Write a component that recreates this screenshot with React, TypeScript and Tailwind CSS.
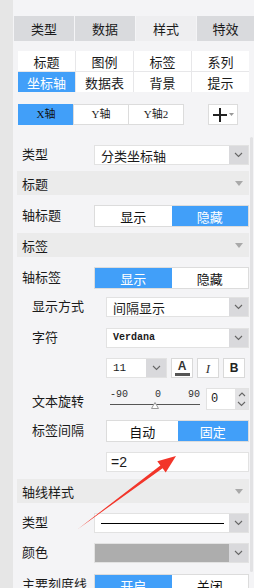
import React from 'react';

const cjk = "font-['Noto_Sans_CJK_SC',sans-serif]";
const mono = "font-['Liberation_Mono',monospace]";

function Chevron() {
  return (
    <svg width="9" height="6" viewBox="0 0 9 6">
      <path d="M1 1l3.5 3.5L8 1" fill="none" stroke="#666" strokeWidth="1.1" />
    </svg>
  );
}

function Caret() {
  return (
    <svg width="8" height="5" viewBox="0 0 8 5">
      <path d="M0 0h8L4 5z" fill="#a9a9a9" />
    </svg>
  );
}

function Select({ className = '', children }: { className?: string; children?: React.ReactNode }) {
  return (
    <div className={`flex h-[20px] border border-[#e2e2e2] bg-white ${className}`}>
      <div className="flex flex-1 items-center overflow-hidden pl-[6px]">{children}</div>
      <div className="flex w-[19px] items-center justify-center bg-[#d9d9dc]">
        <Chevron />
      </div>
    </div>
  );
}

function Toggle({ left, right, on, className = '' }: { left: string; right: string; on: 0 | 1; className?: string }) {
  const cell = 'flex flex-1 items-center justify-center text-[13px]';
  return (
    <div className={`flex h-[22px] border border-[#dcdcdc] bg-white ${className}`}>
      <div className={`${cell} ${on === 0 ? 'bg-[#419ff9] text-white' : 'text-[#111]'}`}>{left}</div>
      <div className={`${cell} ${on === 1 ? 'bg-[#419ff9] text-white' : 'text-[#111]'}`}>{right}</div>
    </div>
  );
}

function Header({ title, className = '' }: { title: string; className?: string }) {
  return (
    <div className={`flex h-[24px] shrink-0 items-center justify-between bg-[#ebebeb] pl-[5px] pr-[6px] text-[13px] ${className}`}>
      <span>{title}</span>
      <Caret />
    </div>
  );
}

function Row({ label, sub, className = '', children }: { label: string; sub?: boolean; className?: string; children: React.ReactNode }) {
  return (
    <div className={`flex shrink-0 items-center ${className}`}>
      <span className={`${sub ? 'w-[89px] pl-[15px]' : 'w-[77px] pl-[5px]'} -mt-[3px] shrink-0 whitespace-nowrap text-[13px]`}>{label}</span>
      <div className="flex flex-1">{children}</div>
    </div>
  );
}

export default function App() {
  const tabs = ['类型', '数据', '样式', '特效'];
  const subTabs = ['标题', '图例', '标签', '系列', '坐标轴', '数据表', '背景', '提示'];
  const axes = ['X轴', 'Y轴', 'Y轴2'];

  return (
    <div className={`relative flex h-[588px] w-[254px] items-start overflow-hidden bg-[#f4f4f6] leading-none text-[#1b1b1b] ${cjk}`}>
      <div className="w-[13px] shrink-0 self-stretch bg-[#e6e6e6]" />

      <div className="flex flex-1 flex-col pt-[16px]">
        {/* main tabs */}
        <div className="ml-px grid h-[25px] shrink-0 grid-cols-[60px_60px_60px_1fr] gap-px">
          {tabs.map((t, i) => (
            <div
              key={t}
              className={`flex items-center justify-center text-[13px] ${i === 2 ? 'bg-[#eeeef0]' : 'bg-[#d9dadd]'}`}
            >
              {t}
            </div>
          ))}
        </div>

        {/* sub tabs */}
        <div className="ml-[5px] mt-[10px] grid w-[231px] shrink-0 grid-cols-4 gap-px bg-[#e7e7e9]">
          {subTabs.map((t, i) => (
            <div
              key={t}
              className={`flex h-[20px] items-center justify-center text-[13px] ${i === 4 ? 'bg-[#419ff9] text-white' : 'bg-white'}`}
            >
              {t}
            </div>
          ))}
        </div>

        {/* axis tabs */}
        <div className="ml-[5px] mt-[12px] flex shrink-0 items-center">
          {axes.map((a, i) => (
            <div
              key={a}
              className={`flex h-[21px] w-[56px] items-center justify-center border text-[11px] font-['Liberation_Serif','Noto_Sans_CJK_SC',serif] ${
                i === 0 ? 'border-[#419ff9] bg-[#419ff9] text-[#111]' : '-ml-px border-[#dcdcdc] bg-white'
              }`}
            >
              {a}
            </div>
          ))}
          <div className="ml-[24px] flex h-[21px] w-[30px] items-center justify-center gap-[2px] border border-[#dcdcdc] bg-white">
            <svg width="14" height="14" viewBox="0 0 14 14">
              <path d="M7 0v14M0 7h14" stroke="#222" strokeWidth="2" />
            </svg>
            <svg width="5" height="3" viewBox="0 0 5 3">
              <path d="M0 0h5L2.5 3z" fill="#999" />
            </svg>
          </div>
        </div>

        {/* property rows */}
        <div className="ml-[4px] mt-[20px] flex w-[232px] shrink-0 flex-col">
          <Row label="类型">
            <Select className="w-full">
              <span className="text-[13px]">分类坐标轴</span>
            </Select>
          </Row>

          <Header title="标题" className="mt-[6px]" />
          <Row label="轴标题" className="mt-[10px]">
            <Toggle left="显示" right="隐藏" on={1} className="w-full" />
          </Row>

          <Header title="标签" className="mt-[6px]" />
          <Row label="轴标签" className="mt-[10px]">
            <Toggle left="显示" right="隐藏" on={0} className="w-full" />
          </Row>

          <Row label="显示方式" sub className="mt-[8px]">
            <Select className="w-full">
              <span className="text-[13px]">间隔显示</span>
            </Select>
          </Row>

          <Row label="字符" sub className="mt-[11px]">
            <Select className="w-full">
              <span className={`${mono} text-[10px] font-bold`}>Verdana</span>
            </Select>
          </Row>

          {/* font size & style */}
          <div className="ml-[89px] mt-[10px] flex h-[20px] shrink-0 items-center">
            <div className="flex h-[20px] w-[61px] border border-[#e2e2e2] bg-white">
              <div className={`flex flex-1 items-center pl-[6px] text-[11px] ${mono}`}>11</div>
              <div className="flex w-[20px] items-center justify-center bg-[#d9d9dc]">
                <Chevron />
              </div>
            </div>
            <div className="ml-[4px] flex h-[20px] w-[22px] flex-col items-center justify-center border border-[#d9d9d9] bg-white">
              <span className="font-['Liberation_Sans',sans-serif] text-[12px] font-bold leading-[11px] text-[#333]">A</span>
              <span className="mt-[1px] h-[3px] w-[15px] bg-[#555]" />
            </div>
            <div className="ml-[4px] flex h-[20px] w-[22px] items-center justify-center border border-[#d9d9d9] bg-white font-['Liberation_Serif',serif] text-[13px] italic text-[#333]">
              I
            </div>
            <div className="ml-[4px] flex h-[20px] w-[22px] items-center justify-center border border-[#d9d9d9] bg-white font-['Liberation_Sans',sans-serif] text-[12px] font-bold text-[#222]">
              B
            </div>
          </div>

          {/* rotation */}
          <div className="mt-[10px] flex h-[22px] shrink-0 items-center">
            <span className="w-[89px] shrink-0 pl-[15px] pt-[3px] text-[13px]">文本旋转</span>
            <div className="ml-[4px] mt-[2px] flex w-[90px] flex-col self-start">
              <div className={`flex justify-between text-[10px] text-[#333] ${mono}`}>
                <span>-90</span>
                <span>0</span>
                <span>90</span>
              </div>
              <div className="relative mt-[4px] h-px bg-[#555]">
                <svg className="absolute left-[41px] -top-[2px]" width="8" height="7" viewBox="0 0 8 7">
                  <path d="M4 0.5L7.5 6.5H0.5z" fill="#fff" stroke="#999" strokeWidth="1" />
                </svg>
              </div>
            </div>
            <div className="ml-[6px] flex h-[22px] border border-[#e2e2e2] bg-white">
              <div className={`flex w-[28px] items-center pl-[4px] text-[12px] ${mono}`}>0</div>
              <div className="flex w-[13px] flex-col items-center justify-center gap-[4px] bg-[#e3e3e5]">
                <svg width="8" height="5" viewBox="0 0 8 5">
                  <path d="M1 4l3-3 3 3" fill="none" stroke="#666" strokeWidth="1.1" />
                </svg>
                <Chevron />
              </div>
            </div>
          </div>

          <Row label="标签间隔" sub className="mt-[10px]">
            <Toggle left="自动" right="固定" on={1} className="w-full" />
          </Row>

          <div className="ml-[89px] mt-[10px] flex h-[20px] shrink-0 items-center border border-[#e2e2e2] bg-white pl-[4px] font-['Liberation_Sans',sans-serif] text-[14px]">
            =2
          </div>

          <Header title="轴线样式" className="mt-[7px]" />

          <Row label="类型" className="mt-[10px]">
            <Select className="w-full">
              <span className="mr-[5px] h-px flex-1 bg-black" />
            </Select>
          </Row>

          <Row label="颜色" className="mt-[10px]">
            <div className="flex h-[20px] w-full border border-[#e2e2e2] bg-white">
              <div className="flex-1 bg-[#adadad]" />
              <div className="flex w-[19px] items-center justify-center bg-[#d9d9dc]">
                <Chevron />
              </div>
            </div>
          </Row>

          <Row label="主要刻度线" className="mt-[11px]">
            <Toggle left="开启" right="关闭" on={0} className="w-full" />
          </Row>
        </div>
      </div>

      {/* scrollbar */}
      <div className="absolute right-[1px] top-[137px] h-[435px] w-[3px] rounded-full bg-[#e2e2e4]" />

      {/* red annotation arrow */}
      <svg className="pointer-events-none absolute left-0 top-0" width="254" height="588" viewBox="0 0 254 588">
        <polygon
          points="78,529 160.4,465.4 157.3,461.2 176,456 165.7,472.4 162.6,468.2"
          fill="#f2352a"
        />
      </svg>
    </div>
  );
}
